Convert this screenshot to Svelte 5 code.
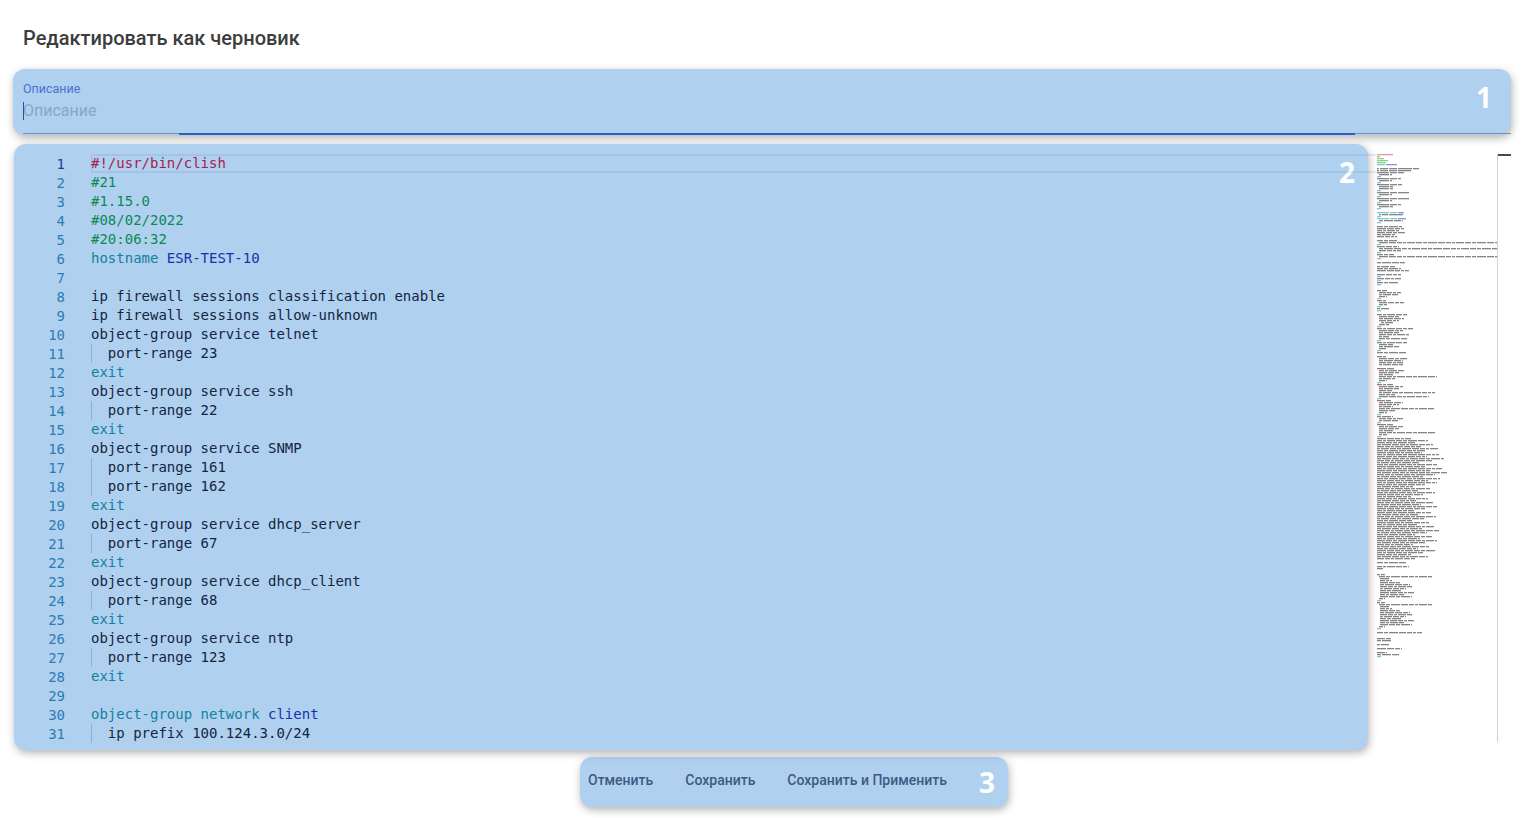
<script>
  const code = `#!/usr/bin/clish
#21
#1.15.0
#08/02/2022
#20:06:32
hostname ESR-TEST-10

ip firewall sessions classification enable
ip firewall sessions allow-unknown
object-group service telnet
  port-range 23
exit
object-group service ssh
  port-range 22
exit
object-group service SNMP
  port-range 161
  port-range 162
exit
object-group service dhcp_server
  port-range 67
exit
object-group service dhcp_client
  port-range 68
exit
object-group service ntp
  port-range 123
exit

object-group network client
  ip prefix 100.124.3.0/24`.split('\n');

  function tokens(line) {
    const t = line.trim();
    if (t.startsWith('#!')) return [['shebang', line]];
    if (t.startsWith('#')) return [['comment', line]];
    if (t === 'exit') return [['kw', line]];
    if (t.startsWith('hostname ')) return [['kw', 'hostname '], ['val', t.slice(9)]];
    if (t.startsWith('object-group network ')) return [['kw', 'object-group network '], ['val', t.slice(21)]];
    return [['', line]];
  }

  // rest of the config, only seen in the minimap: indent.length, e = exit, n = network group
  const bulk = Array.from({ length: 61 }, (_, i) => `0.${34 + ((i * 17) % 29) + (i > 6 && i < 22 ? 8 : 0)}`);
  const rest = [
    'e', 'n', '2.24', 'e', '',
    '0.25', '0.28', '0.22', '0.28', '0.18', '0.20', '',
    '0.20', '2.118', 'e', '0.22', '2.118', '2.22', 'e', '0.17', '2.118', 'e', '',
    '0.28', '', '0.18', '0.24', '0.32', '', '0.24', 'e', '0.24', 'e', '0.22', 'e', '', '',
    '0.10', '2.22', '2.20', '2.8', 'e', '0.10', '2.25', '2.8', 'e', '0.12', 'e', '',
    '0.30', '2.20', '2.25', '2.20', '4.12', '2.10', 'e',
    '0.36', '2.24', '2.20', '2.30', '2.10', '2.28', 'e',
    '0.30', '2.14', '2.20', '2.8', 'e', '0.30', '',
    '0.10', '2.28', '2.24', '2.24', '2.24', '',
    '0.18', '2.26', '2.20', '2.14', '2.58', '2.16', '2.8', 'e',
    '0.16', '2.24', '2.20', '2.14', '2.56', '2.16', '2.50', 'e',
    '0.14', '2.24', '2.20', '2.14', '2.56', '2.16', '2.8', 'e',
    '0.16', '2.24', '2.20', 'e',
    '0.16', '2.24', '2.20', '2.14', '2.56', '2.8', 'e',
    ...bulk, '',
    '0.30', '', '0.32', '0.6', '', '', '0.8',
    '2.53', '3.10', '3.12', '3.20', '3.30', '3.32', '3.26', '3.22', '3.34', '3.24', '3.32', '2.6', 'e',
    '0.8', '2.53', '3.10', '3.12', '3.20', '3.30', '3.32', '3.26', '3.22', '3.34', '3.24', '3.32', '2.6', 'e', '',
    '0.45', '', '', '0.14', '0.14', '', '0.12', '', '0.25', '', '0.10', '0.22', 'e'
  ];

  const rects = [];
  function word(x, row, w, cls) {
    rects.push({ x, y: row * 2, w, cls });
  }
  code.forEach((line, row) => {
    let x = 0;
    for (const [cls, text] of tokens(line)) {
      for (const part of text.split(/( +)/)) {
        if (part.trim()) word(x, row, part.length, cls);
        x += part.length;
      }
    }
  });
  rest.forEach((spec, i) => {
    const row = i + code.length;
    if (!spec) return;
    if (spec === 'e') return word(0, row, 4, 'kw');
    if (spec === 'n') {
      word(0, row, 12, 'kw');
      word(13, row, 7, 'kw');
      word(21, row, 8, 'val');
      return;
    }
    const [indent, len] = spec.split('.').map(Number);
    let x = indent;
    let k = 0;
    const end = Math.min(indent + len, 120);
    while (x < end) {
      const w = Math.min(3 + ((row * 3 + k * 5) % 7), end - x);
      word(x, row, w, '');
      x += w + 1;
      k++;
    }
  });
</script>

<div class="page">
  <h1>Редактировать как черновик</h1>

  <div class="field panel">
    <span class="label">Описание</span>
    <div class="input"><i class="caret"></i>Описание</div>
    <div class="rule"><b></b></div>
    <span class="mark mark1">1</span>
  </div>

  <div class="editor">
    <div class="code panel">
      <div class="current"></div>
      <div class="lines">
        {#each code as line, i}
          <div class="row">
            <span class="num" class:active={i === 0}>{i + 1}</span>
            <span class="text">{#if line.startsWith('  ')}<i class="guide"></i>{/if}{#each tokens(line) as [cls, text]}<span class={cls}>{text}</span>{/each}</span>
          </div>
        {/each}
      </div>
      <span class="mark mark2">2</span>
    </div>
    <svg class="minimap" width="121" height="590" viewBox="0 0 121 590" aria-hidden="true">
      {#each rects as r}
        <rect x={r.x} y={r.y} width={r.w} height="1.3" class={r.cls} />
      {/each}
    </svg>
    <div class="ruler"><b></b></div>
  </div>

  <div class="actions panel">
    <button>Отменить</button>
    <button>Сохранить</button>
    <button>Сохранить и Применить</button>
    <span class="mark3">3</span>
  </div>
</div>

<style>
  :global(body) {
    margin: 0;
    background: #fff;
    overflow: hidden;
  }
  .page {
    height: 819px;
    display: flex;
    flex-direction: column;
    font-family: Roboto, "Liberation Sans", sans-serif;
  }
  h1 {
    margin: 0;
    padding: 26px 0 0 23px;
    height: 42px;
    box-sizing: border-box;
    font-size: 20px;
    font-weight: 500;
    line-height: 24px;
    color: #3d3d3d;
  }
  .panel {
    background: #b0d0f0;
    border-radius: 12px;
    box-shadow: 1px 3px 8px rgba(0, 0, 0, 0.3);
  }
  .field {
    position: relative;
    box-sizing: border-box;
    margin: 27px 20px 0 13px;
    height: 66px;
    padding: 13px 0 0 10px;
  }
  .label {
    display: block;
    font-size: 12.5px;
    line-height: 14px;
    color: #4a72cf;
  }
  .input {
    position: relative;
    margin-top: 4px;
    font-size: 16px;
    line-height: 22px;
    color: #8aa6c6;
  }
  .caret {
    position: absolute;
    left: 0;
    top: 2px;
    width: 1px;
    height: 18px;
    background: #2a4d9e;
  }
  .rule {
    position: absolute;
    left: 10px;
    right: 0;
    bottom: 1px;
    height: 1px;
    background: #6d8fb5;
  }
  .rule b {
    position: absolute;
    left: 156px;
    width: 1176px;
    top: 0;
    height: 2px;
    background: #2f5fc4;
  }
  .mark, .mark3 {
    font-family: "Open Sans", "Noto Sans", sans-serif;
    font-weight: 700;
    font-size: 28px;
    line-height: 32px;
    color: #fff;
  }
  .mark {
    position: absolute;
  }
  .mark1 {
    right: 19px;
    top: 12px;
  }
  .mark2 {
    right: 13px;
    top: 12px;
  }
  .editor {
    display: flex;
    margin: 9px 0 0 14px;
    height: 606px;
  }
  .code {
    position: relative;
    width: 1354px;
    flex: none;
    box-sizing: border-box;
    padding-top: 10px;
    font-family: "DejaVu Sans Mono", "Liberation Mono", monospace;
    font-size: 14px;
    line-height: 19px;
    color: #12263f;
  }
  .current {
    position: absolute;
    left: 77px;
    right: -8px;
    top: 10px;
    height: 19px;
    box-sizing: border-box;
    border: solid rgba(90, 125, 165, 0.15);
    border-width: 2px 0 2px 2px;
    z-index: 1;
  }
  .row {
    display: flex;
    height: 19px;
    white-space: pre;
  }
  .num {
    width: 51px;
    flex: none;
    text-align: right;
    position: relative;
    top: 1px;
    color: #2b7cb3;
  }
  .num.active {
    color: #15429a;
  }
  .text {
    position: relative;
    margin-left: 26px;
  }
  .guide {
    position: absolute;
    left: 0;
    top: 0;
    width: 1px;
    height: 19px;
    background: #8eb0d2;
  }
  .shebang { color: #a5224f; }
  .comment { color: #0c8a55; }
  .kw { color: #12819f; }
  .val { color: #1433a8; }
  .minimap {
    flex: none;
    margin: 10px 0 0 9px;
  }
  .minimap rect {
    fill: #333;
    opacity: 0.6;
  }
  .minimap rect.shebang { fill: #f0485c; }
  .minimap rect.comment { fill: #3cb03c; }
  .minimap rect.kw { fill: #2fa4b2; }
  .minimap rect.val { fill: #3a48d0; }
  .ruler {
    position: relative;
    flex: none;
    width: 1px;
    margin: 10px 0 8px -1px;
    background: #d0d0d0;
  }
  .ruler b {
    position: absolute;
    left: 1px;
    top: 0;
    width: 13px;
    height: 2px;
    background: #4a4a4a;
  }
  .actions {
    align-self: flex-start;
    margin: 7px 0 0 580px;
    box-sizing: border-box;
    height: 50px;
    width: 428px;
    display: flex;
    align-items: center;
    padding-left: 8px;
    gap: 32px;
  }
  button {
    border: 0;
    padding: 0 0 4px;
    background: none;
    font: 500 14px/20px Roboto, "Liberation Sans", sans-serif;
    color: #3d5a80;
  }
  .mark3 {
    margin-left: auto;
    margin-right: 13px;
  }
</style>
